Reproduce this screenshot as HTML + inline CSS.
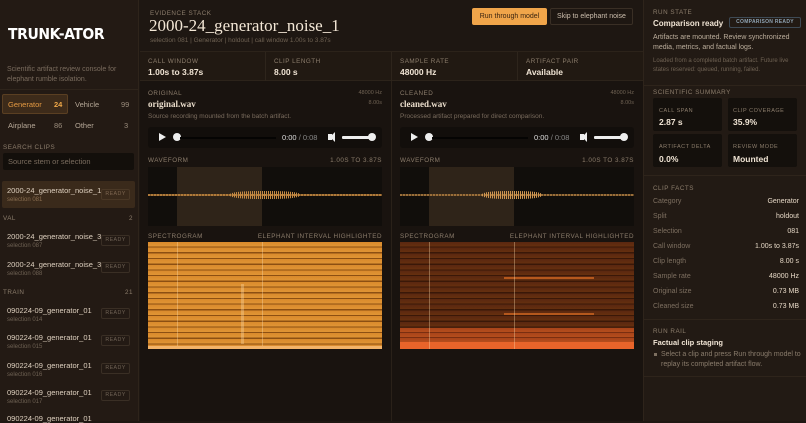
<!DOCTYPE html>
<html><head><meta charset="utf-8"><style>
*{margin:0;padding:0;box-sizing:border-box}
body{width:806px;height:421px;overflow:hidden;background:#1e1712;font-family:"Liberation Sans",sans-serif;color:#e9dccb;position:relative}
.a{position:absolute;white-space:nowrap}
.lab{font-size:6.3px;letter-spacing:.5px;color:#8c7d6c;text-transform:uppercase}
.val{font-size:8.5px;font-weight:bold;color:#f0e4d4}
.serif{font-family:"Liberation Serif",serif}
.ready{position:absolute;left:101px;width:29px;height:11px;border:1px solid #3a2f25;border-radius:2px;font-size:5.3px;letter-spacing:.4px;color:#6f6255;text-align:center;line-height:9px}
.item .n{font-size:7.5px;color:#ded0bf}
.item .s{font-size:6px;color:#6e6153}
.card{position:absolute;width:69px;height:33px;background:#14100c;border-radius:2px}
.fr{position:absolute;left:653px;width:146px;font-size:7px;color:#7d6f60}
.fr b{float:right;font-weight:normal;color:#e6d8c6}
.spec{position:absolute;top:242px;width:234px;height:107px}
.r{text-align:right}
</style></head><body>
<!-- left sidebar -->
<div class="a" style="left:0;top:0;width:139px;height:421px;background:#231a14;border-right:1px solid #2e241b"></div>
<div class="a" style="left:8px;top:25px;font-size:15.5px;font-weight:bold;color:#fff;letter-spacing:-.4px;font-family:'DejaVu Sans Condensed','Liberation Sans',sans-serif">TRUNK-ATOR</div>
<div class="a" style="left:7px;top:65px;font-size:7px;line-height:10px;color:#7a6c5e;white-space:normal;width:120px">Scientific artifact review console for elephant rumble isolation.</div>
<div class="a" style="left:0;top:89px;width:139px;height:1px;background:#2e241b"></div>
<div class="a" style="left:2px;top:94px;width:66px;height:20px;background:#3d2b1a;border:1px solid #5a3f22;border-radius:2px"></div>
<div class="a" style="left:8px;top:100px;font-size:7.5px;color:#e59a42">Generator</div>
<div class="a" style="left:54px;top:100px;font-size:7.5px;color:#f0a848;font-weight:bold">24</div>
<div class="a" style="left:75px;top:100px;font-size:7.5px;color:#b5a796">Vehicle</div>
<div class="a" style="left:121px;top:100px;font-size:7.5px;color:#9a8c7c">99</div>
<div class="a" style="left:8px;top:121px;font-size:7.5px;color:#b5a796">Airplane</div>
<div class="a" style="left:54px;top:121px;font-size:7.5px;color:#9a8c7c">86</div>
<div class="a" style="left:75px;top:121px;font-size:7.5px;color:#b5a796">Other</div>
<div class="a" style="left:124px;top:121px;font-size:7.5px;color:#9a8c7c">3</div>
<div class="a lab" style="left:3px;top:144px">Search clips</div>
<div class="a" style="left:3px;top:153px;width:131px;height:17px;background:#130f0b;border-radius:2px"></div>
<div class="a" style="left:8px;top:157px;font-size:7.5px;color:#7a6c5e">Source stem or selection</div>
<div class="a" style="left:2px;top:181px;width:133px;height:27px;background:#3a2a1b;border-radius:2px"></div>
<div class="a item" style="left:7px;top:186px"><div class="n">2000-24_generator_noise_1</div><div class="s" style="color:#8a6e50;margin-top:2px">selection 081</div></div>
<div class="ready" style="top:189px;border-color:#4a3826;color:#7d6650">READY</div>
<div class="a lab" style="left:3px;top:215px">VAL</div><div class="a lab" style="left:129px;top:215px">2</div>
<div class="a item" style="left:7px;top:232px"><div class="n">2000-24_generator_noise_3</div><div class="s" style="margin-top:2px">selection 087</div></div>
<div class="ready" style="top:235px">READY</div>
<div class="a item" style="left:7px;top:260px"><div class="n">2000-24_generator_noise_3</div><div class="s" style="margin-top:2px">selection 088</div></div>
<div class="ready" style="top:262px">READY</div>
<div class="a lab" style="left:3px;top:289px">TRAIN</div><div class="a lab" style="left:125px;top:289px">21</div>
<div class="a item" style="left:7px;top:306px"><div class="n">090224-09_generator_01</div><div class="s" style="margin-top:2px">selection 014</div></div>
<div class="ready" style="top:308px">READY</div>
<div class="a item" style="left:7px;top:333px"><div class="n">090224-09_generator_01</div><div class="s" style="margin-top:2px">selection 015</div></div>
<div class="ready" style="top:335px">READY</div>
<div class="a item" style="left:7px;top:361px"><div class="n">090224-09_generator_01</div><div class="s" style="margin-top:2px">selection 016</div></div>
<div class="ready" style="top:363px">READY</div>
<div class="a item" style="left:7px;top:388px"><div class="n">090224-09_generator_01</div><div class="s" style="margin-top:2px">selection 017</div></div>
<div class="ready" style="top:390px">READY</div>
<div class="a item" style="left:7px;top:414px"><div class="n">090224-09_generator_01</div></div>

<!-- main -->
<div class="a lab" style="left:150px;top:10px">Evidence stack</div>
<div class="a serif" style="left:149px;top:16px;font-size:17px;color:#f3e7d6">2000-24_generator_noise_1</div>
<div class="a" style="left:150px;top:37px;font-size:6.5px;color:#6f6253">selection 081 | Generator | holdout | call window 1.00s to 3.87s</div>
<div class="a" style="left:472px;top:8px;width:75px;height:17px;background:#f0a54a;border-radius:2px;font-size:7px;color:#3a2410;text-align:center;line-height:17px">Run through model</div>
<div class="a" style="left:550px;top:8px;width:83px;height:17px;border:1px solid #3a2f25;border-radius:2px;font-size:7px;color:#cdbfae;text-align:center;line-height:15px">Skip to elephant noise</div>
<div class="a" style="left:140px;top:51px;width:503px;height:30px;background:#211912;border-top:1px solid #2c231a;border-bottom:1px solid #2c231a"></div>
<div class="a" style="left:265px;top:52px;width:1px;height:29px;background:#2e251c"></div>
<div class="a" style="left:391px;top:52px;width:1px;height:29px;background:#2e251c"></div>
<div class="a" style="left:517px;top:52px;width:1px;height:29px;background:#2e251c"></div>
<div class="a lab" style="left:148px;top:58px">Call window</div><div class="a val" style="left:148px;top:67px">1.00s to 3.87s</div>
<div class="a lab" style="left:274px;top:58px">Clip length</div><div class="a val" style="left:274px;top:67px">8.00 s</div>
<div class="a lab" style="left:400px;top:58px">Sample rate</div><div class="a val" style="left:400px;top:67px">48000 Hz</div>
<div class="a lab" style="left:526px;top:58px">Artifact pair</div><div class="a val" style="left:526px;top:67px">Available</div>
<!-- panels -->
<div class="a" style="left:140px;top:81px;width:251px;height:340px;background:#19130f"></div>
<div class="a" style="left:391px;top:81px;width:1px;height:340px;background:#2a2119"></div>
<div class="a" style="left:392px;top:81px;width:251px;height:340px;background:#19130f"></div>

<div class="a lab" style="left:148px;top:90px">Original</div>
<div class="a r" style="left:332px;width:50px;top:90px;font-size:5.5px;color:#6f6253">48000 Hz</div>
<div class="a r" style="left:332px;width:50px;top:100px;font-size:5.5px;color:#6f6253">8.00s</div>
<div class="a serif" style="left:148px;top:99px;font-size:9px;font-weight:bold;color:#ecdfcd">original.wav</div>
<div class="a" style="left:148px;top:113px;font-size:6.5px;color:#7a6c5e">Source recording mounted from the batch artifact.</div>
<div class="a lab" style="left:400px;top:90px">Cleaned</div>
<div class="a r" style="left:584px;width:50px;top:90px;font-size:5.5px;color:#6f6253">48000 Hz</div>
<div class="a r" style="left:584px;width:50px;top:100px;font-size:5.5px;color:#6f6253">8.00s</div>
<div class="a serif" style="left:400px;top:99px;font-size:9px;font-weight:bold;color:#ecdfcd">cleaned.wav</div>
<div class="a" style="left:400px;top:113px;font-size:6.5px;color:#7a6c5e">Processed artifact prepared for direct comparison.</div>

<!-- players -->
<div class="a" style="left:148px;top:127px;width:234px;height:21px;background:#120e0b;border-radius:3px">
<div class="a" style="left:11px;top:6px;width:0;height:0;border-left:7px solid #eee;border-top:4.5px solid transparent;border-bottom:4.5px solid transparent"></div>
<div class="a" style="left:25px;top:6px;width:8px;height:8px;border-radius:50%;background:#eee"></div>
<div class="a" style="left:32px;top:9.5px;width:96px;height:2px;background:#050403"></div>
<div class="a" style="left:134px;top:6px;font-size:7.5px;color:#ddd">0:00 <span style="color:#888">/ 0:08</span></div>
<div class="a" style="left:180px;top:7px;width:4px;height:6px;background:#eee"></div>
<div class="a" style="left:182px;top:5px;width:0;height:0;border-right:5px solid #eee;border-top:5px solid transparent;border-bottom:5px solid transparent"></div>
<div class="a" style="left:194px;top:9px;width:30px;height:2.5px;background:#eee;border-radius:1px"></div>
<div class="a" style="left:220px;top:6px;width:8px;height:8px;border-radius:50%;background:#eee"></div>
</div>
<div class="a" style="left:400px;top:127px;width:234px;height:21px;background:#120e0b;border-radius:3px">
<div class="a" style="left:11px;top:6px;width:0;height:0;border-left:7px solid #eee;border-top:4.5px solid transparent;border-bottom:4.5px solid transparent"></div>
<div class="a" style="left:25px;top:6px;width:8px;height:8px;border-radius:50%;background:#eee"></div>
<div class="a" style="left:32px;top:9.5px;width:96px;height:2px;background:#050403"></div>
<div class="a" style="left:134px;top:6px;font-size:7.5px;color:#ddd">0:00 <span style="color:#888">/ 0:08</span></div>
<div class="a" style="left:180px;top:7px;width:4px;height:6px;background:#eee"></div>
<div class="a" style="left:182px;top:5px;width:0;height:0;border-right:5px solid #eee;border-top:5px solid transparent;border-bottom:5px solid transparent"></div>
<div class="a" style="left:194px;top:9px;width:30px;height:2.5px;background:#eee;border-radius:1px"></div>
<div class="a" style="left:220px;top:6px;width:8px;height:8px;border-radius:50%;background:#eee"></div>
</div>

<!-- waveforms -->
<div class="a lab" style="left:148px;top:157px">Waveform</div>
<div class="a lab r" style="left:282px;width:100px;top:157px">1.00s to 3.87s</div>
<div class="a lab" style="left:400px;top:157px">Waveform</div>
<div class="a lab r" style="left:534px;width:100px;top:157px">1.00s to 3.87s</div>
<div class="a" style="left:148px;top:167px;width:234px;height:59px;background:#110e0b"></div>
<div class="a" style="left:177px;top:167px;width:85px;height:59px;background:#2f2419"></div>
<div class="a" style="left:400px;top:167px;width:234px;height:59px;background:#110e0b"></div>
<div class="a" style="left:429px;top:167px;width:85px;height:59px;background:#2f2419"></div>
<div class="a" style="left:148px;top:194px;width:234px;height:2px;background:repeating-linear-gradient(90deg,#b07a3a 0,#b07a3a 2px,#7a5428 2px,#7a5428 3px)"></div>
<div class="a" style="left:230px;top:191px;width:70px;height:8px;background:repeating-linear-gradient(90deg,#c68a43 0,#c68a43 1px,rgba(0,0,0,0) 1px,rgba(0,0,0,0) 2px);border-radius:40%"></div>
<div class="a" style="left:400px;top:194px;width:234px;height:1.5px;background:repeating-linear-gradient(90deg,#9a6e3a 0,#9a6e3a 2px,#5a4020 2px,#5a4020 3px)"></div>
<div class="a" style="left:482px;top:191px;width:60px;height:8px;background:repeating-linear-gradient(90deg,#d09650 0,#d09650 1px,rgba(0,0,0,0) 1px,rgba(0,0,0,0) 2px);border-radius:40%"></div>

<!-- spectrograms -->
<div class="a lab" style="left:148px;top:233px">Spectrogram</div>
<div class="a lab r" style="left:232px;width:150px;top:233px">Elephant interval highlighted</div>
<div class="a lab" style="left:400px;top:233px">Spectrogram</div>
<div class="a lab r" style="left:484px;width:150px;top:233px">Elephant interval highlighted</div>
<div class="spec" style="left:148px;background:repeating-linear-gradient(180deg,#d98a2c 0,#e09535 4.5px,#8c4f12 4.5px,#8c4f12 5.7px)">
<div class="a" style="left:29px;top:0;width:1px;height:107px;background:rgba(255,225,180,.35)"></div>
<div class="a" style="left:114px;top:0;width:1px;height:107px;background:rgba(255,225,180,.35)"></div>
<div class="a" style="left:93px;top:42px;width:3px;height:60px;background:rgba(255,220,170,.35)"></div>
<div class="a" style="left:0;top:104px;width:234px;height:3px;background:#f3b46a"></div>
</div>
<div class="spec" style="left:400px;background:repeating-linear-gradient(180deg,#5a2710 0,#66300f 4.5px,#3a1808 4.5px,#3a1808 5.7px)">
<div class="a" style="left:0;top:86px;width:234px;height:21px;background:repeating-linear-gradient(180deg,#a8441a 0,#b54d1c 4px,#7a2e10 4px,#7a2e10 5px)"></div>
<div class="a" style="left:0;top:100px;width:234px;height:7px;background:#e8642a"></div>
<div class="a" style="left:104px;top:35px;width:90px;height:1.5px;background:#b5581d"></div>
<div class="a" style="left:104px;top:71px;width:90px;height:1.5px;background:#b5581d"></div>
<div class="a" style="left:29px;top:0;width:1px;height:107px;background:rgba(255,225,180,.35)"></div>
<div class="a" style="left:114px;top:0;width:1px;height:107px;background:rgba(255,225,180,.35)"></div>
</div>

<!-- right sidebar -->
<div class="a" style="left:643px;top:0;width:163px;height:421px;background:#221a14;border-left:1px solid #2e241b"></div>
<div class="a lab" style="left:653px;top:9px">Run state</div>
<div class="a" style="left:653px;top:19px;font-size:8px;font-weight:bold;color:#f0e4d4">Comparison ready</div>
<div class="a" style="left:729px;top:17px;width:72px;height:11px;border:1px solid #3e4a55;border-radius:2px;font-size:5px;font-weight:bold;letter-spacing:.3px;color:#8fa3b3;text-align:center;line-height:9px">COMPARISON READY</div>
<div class="a" style="left:653px;top:33px;font-size:7px;line-height:10px;color:#bcae9c;white-space:normal;width:150px">Artifacts are mounted. Review synchronized media, metrics, and factual logs.</div>
<div class="a" style="left:653px;top:57px;font-size:6px;line-height:8.5px;color:#6f6253;white-space:normal;width:150px">Loaded from a completed batch artifact. Future live states reserved: queued, running, failed.</div>
<div class="a" style="left:644px;top:85px;width:162px;height:1px;background:#2e241b"></div>
<div class="a lab" style="left:653px;top:89px">Scientific summary</div>
<div class="card" style="left:653px;top:98px"></div><div class="card" style="left:728px;top:98px"></div>
<div class="card" style="left:653px;top:134px"></div><div class="card" style="left:728px;top:134px"></div>
<div class="a lab" style="left:659px;top:108px;font-size:5.5px">Call span</div><div class="a val" style="left:659px;top:117px">2.87 s</div>
<div class="a lab" style="left:733px;top:108px;font-size:5.5px">Clip coverage</div><div class="a val" style="left:733px;top:117px">35.9%</div>
<div class="a lab" style="left:659px;top:144px;font-size:5.5px">Artifact delta</div><div class="a val" style="left:659px;top:154px">0.0%</div>
<div class="a lab" style="left:733px;top:144px;font-size:5.5px">Review mode</div><div class="a val" style="left:733px;top:154px">Mounted</div>
<div class="a" style="left:644px;top:175px;width:162px;height:1px;background:#2e241b"></div>
<div class="a lab" style="left:653px;top:185px">Clip facts</div>
<div class="fr" style="top:198px">Category<b>Generator</b></div>
<div class="fr" style="top:213px">Split<b>holdout</b></div>
<div class="fr" style="top:228px">Selection<b>081</b></div>
<div class="fr" style="top:243px">Call window<b>1.00s to 3.87s</b></div>
<div class="fr" style="top:258px">Clip length<b>8.00 s</b></div>
<div class="fr" style="top:273px">Sample rate<b>48000 Hz</b></div>
<div class="fr" style="top:288px">Original size<b>0.73 MB</b></div>
<div class="fr" style="top:303px">Cleaned size<b>0.73 MB</b></div>
<div class="a" style="left:644px;top:319px;width:162px;height:1px;background:#2e241b"></div>
<div class="a lab" style="left:653px;top:328px">Run rail</div>
<div class="a" style="left:653px;top:338px;font-size:7.5px;font-weight:bold;color:#f0e4d4">Factual clip staging</div>
<div class="a" style="left:654px;top:353px;width:3px;height:3px;background:#7d6f60"></div>
<div class="a" style="left:661px;top:350px;font-size:7px;line-height:10px;color:#8a7c6c;white-space:normal;width:142px">Select a clip and press Run through model to replay its completed artifact flow.</div>
<div class="a" style="left:644px;top:376px;width:162px;height:1px;background:#2e241b"></div>
</body></html>
